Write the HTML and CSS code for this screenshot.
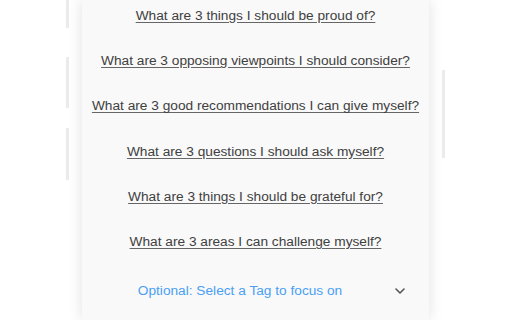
FILE: index.html
```html
<!DOCTYPE html>
<html lang="en">
<head>
<meta charset="UTF-8" />
<meta name="viewport" content="width=device-width, initial-scale=1" />
<title>Reflection prompts</title>
<link rel="stylesheet" href="styles.css">
</head>
<body>

<div class="stage">
  <!-- slivers of the neighbouring cards -->
  <div class="rail rail-left">
    <span class="seg s1"></span>
    <span class="seg s2"></span>
    <span class="seg s3"></span>
  </div>

  <div class="card">
    <ul class="prompts">
      <li><a href="#">What are 3 things I should be proud of?</a></li>
      <li><a href="#">What are 3 opposing viewpoints I should consider?</a></li>
      <li><a href="#">What are 3 good recommendations I can give myself?</a></li>
      <li><a href="#">What are 3 questions I should ask myself?</a></li>
      <li><a href="#">What are 3 things I should be grateful for?</a></li>
      <li><a href="#">What are 3 areas I can challenge myself?</a></li>
    </ul>

    <div class="tag-select">
      <span class="tag-label">Optional: Select a Tag to focus on</span>
      <svg class="chevron" viewBox="0 0 10 6" width="10" height="6">
        <path d="M1 1l4 4 4-4" fill="none" stroke="#555" stroke-width="1.6" stroke-linecap="round" stroke-linejoin="round"/>
      </svg>
    </div>
  </div>

  <div class="rail rail-right">
    <span class="seg s4"></span>
  </div>
</div>

</body>
</html>
```

FILE: styles.css
```css
body {
  margin: 0; padding: 0;
  background: #fff;
  font-family: 'Liberation Sans', Arial, sans-serif;
  overflow: hidden;
}
.stage {
  display: flex;
  height: 320px;
  overflow: hidden;
}
.rail {
  width: 3px;
  display: flex;
  flex-direction: column;
  flex-shrink: 0;
}
.rail-left { margin-left: 66px; }
.rail-right { margin-left: 13px; }
.seg {
  display: block;
  background: #ebebeb;
}
.s1 { height: 28px; }
.s2 { height: 51px; margin-top: 29px; }
.s3 { height: 52px; margin-top: 20px; }
.s4 { height: 88px; margin-top: 70px; }

.card {
  margin-left: 13px;
  width: 347px;
  flex-shrink: 0;
  background: #f9f9f9;
  box-shadow: 0 0 14px rgba(0,0,0,0.12);
  padding-top: 6px;
}
.prompts {
  list-style: none;
  margin: 0; padding: 0;
  display: flex;
  flex-direction: column;
  gap: 25.2px;
  text-align: center;
}
.prompts li {
  line-height: 20px;
  font-size: 13.7px;
}
.prompts a {
  color: #404040;
  text-decoration: underline;
  text-decoration-color: #666;
  text-underline-offset: 2px;
}
.tag-select {
  display: flex;
  align-items: center;
  gap: 20px;
  margin-top: 29px;
  padding: 0 24px 0 23px;
  height: 20px;
}
.tag-label {
  flex: 1;
  text-align: center;
  font-size: 13.7px;
  color: #4a9ff5;
}
.chevron {
  display: block;
  flex-shrink: 0;
}
```
